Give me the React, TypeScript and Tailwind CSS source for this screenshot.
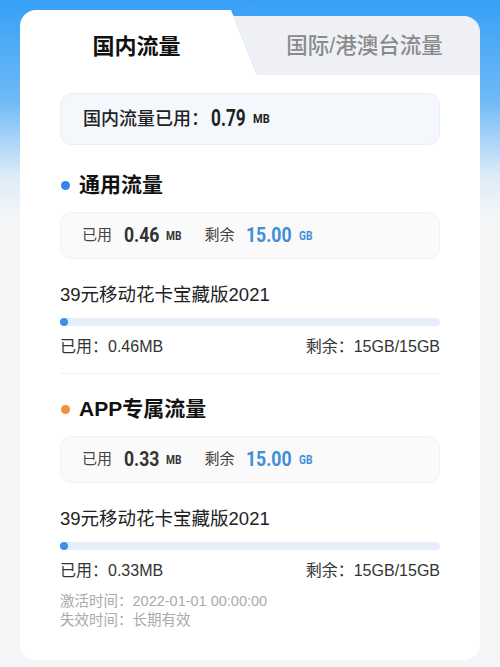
const CJK = "font-['Liberation_Sans','Noto_Sans_CJK_SC',sans-serif]";
const NUM = "inline-block font-['Roboto',sans-serif] font-bold origin-left";

type Section = {
  title: string;
  dot: string;
  used: string;
  usedLabel: string;
};

const sections: Section[] = [
  { title: "通用流量", dot: "bg-[#2f87ea]", used: "0.46", usedLabel: "0.46MB" },
  { title: "APP专属流量", dot: "bg-[#f0913a]", used: "0.33", usedLabel: "0.33MB" },
];

function StatBox({ used }: { used: string }) {
  return (
    <div className="flex h-[47px] items-center rounded-xl border border-[#f3f3f3] bg-[#fafafa] px-[21px]">
      <span className="text-[15px] text-[#444]">已用</span>
      <span className={`${NUM} ml-[12px] mr-[-6px] scale-x-[0.84] text-[21px] text-[#333]`}>{used}</span>
      <span className={`${NUM} ml-[6px] scale-x-[0.85] text-[12px] text-[#333]`}>MB</span>
      <span className="ml-[20px] text-[15px] text-[#444]">剩余</span>
      <span className={`${NUM} ml-[12px] mr-[-8px] scale-x-[0.84] text-[21px] text-[#3b8fdc]`}>15.00</span>
      <span className={`${NUM} ml-[6px] scale-x-[0.85] text-[12px] text-[#3b8fdc]`}>GB</span>
    </div>
  );
}

function Plan({ usedLabel }: { usedLabel: string }) {
  return (
    <div className="flex flex-col">
      <div className="text-[18.5px] leading-[26px] text-[#222]">39元移动花卡宝藏版2021</div>
      <div className="mt-[10px] h-[8px] w-full rounded-full bg-[#e6eefb]">
        <div className="h-[8px] w-[8px] rounded-full bg-[#3a92ea]" />
      </div>
      <div className="mt-[10px] flex justify-between text-[16px] leading-[22px] text-[#333]">
        <span>已用：{usedLabel}</span>
        <span>剩余：15GB/15GB</span>
      </div>
    </div>
  );
}

export default function App() {
  return (
    <div
      className={`${CJK} h-[667px] w-full overflow-hidden bg-[linear-gradient(180deg,#36a0f6_0px,#6fb9f7_100px,#dcebf8_175px,#f4f5f7_215px,#f4f5f7_100%)] px-[20px] pt-[10px]`}
    >
      {/* tabs */}
      <div className="flex h-[65px]">
        <div className="flex w-[237px] shrink-0 items-center justify-center rounded-tl-2xl bg-white pt-[8px] [clip-path:polygon(0_0,211px_0,237px_100%,0_100%)]">
          <span className="pr-[4px] text-[22px] font-bold text-[#111]">国内流量</span>
        </div>
        <div className="-ml-[24px] mt-[6px] flex flex-1 items-center justify-center rounded-tr-2xl bg-[#eef0f6] pl-[16px] pt-[2px] [clip-path:polygon(0_0,100%_0,100%_100%,24px_100%)]">
          <span className="text-[21.5px] font-medium text-[#8a8a8a]">国际/港澳台流量</span>
        </div>
      </div>

      {/* body */}
      <div className="flex h-[585px] flex-col rounded-b-2xl bg-white px-[40px] pt-[18px]">
        <div className="flex h-[52px] items-center rounded-xl border border-[#e9eff8] bg-[#f4f8fd] px-[22px]">
          <span className="text-[18px] font-medium text-[#222]">国内流量已用：</span>
          <span className={`${NUM} ml-[2px] mr-[-11px] scale-x-[0.75] text-[23px] text-[#222]`}>0.79</span>
          <span className={`${NUM} ml-[7px] scale-x-[0.85] text-[13px] text-[#222]`}>MB</span>
        </div>

        {sections.map((s, i) => (
          <div key={s.title} className="flex flex-col">
            {i > 0 && <div className="mt-[15px] h-px bg-[#f1f1f1]" />}
            <div className={`${i === 0 ? "mt-[26px]" : "mt-[21px]"} flex h-[28px] items-center`}>
              <span className={`ml-[1px] h-[9px] w-[9px] rounded-full ${s.dot}`} />
              <span className="ml-[9px] text-[21px] font-bold text-[#111]">{s.title}</span>
            </div>
            <div className="mt-[13px]">
              <StatBox used={s.used} />
            </div>
            <div className="mt-[23px]">
              <Plan usedLabel={s.usedLabel} />
            </div>
          </div>
        ))}

        <div className="mt-[10px] flex flex-col text-[14.5px] leading-[19px] text-[#aaa]">
          <span>激活时间：2022-01-01 00:00:00</span>
          <span>失效时间：长期有效</span>
        </div>
      </div>
    </div>
  );
}
